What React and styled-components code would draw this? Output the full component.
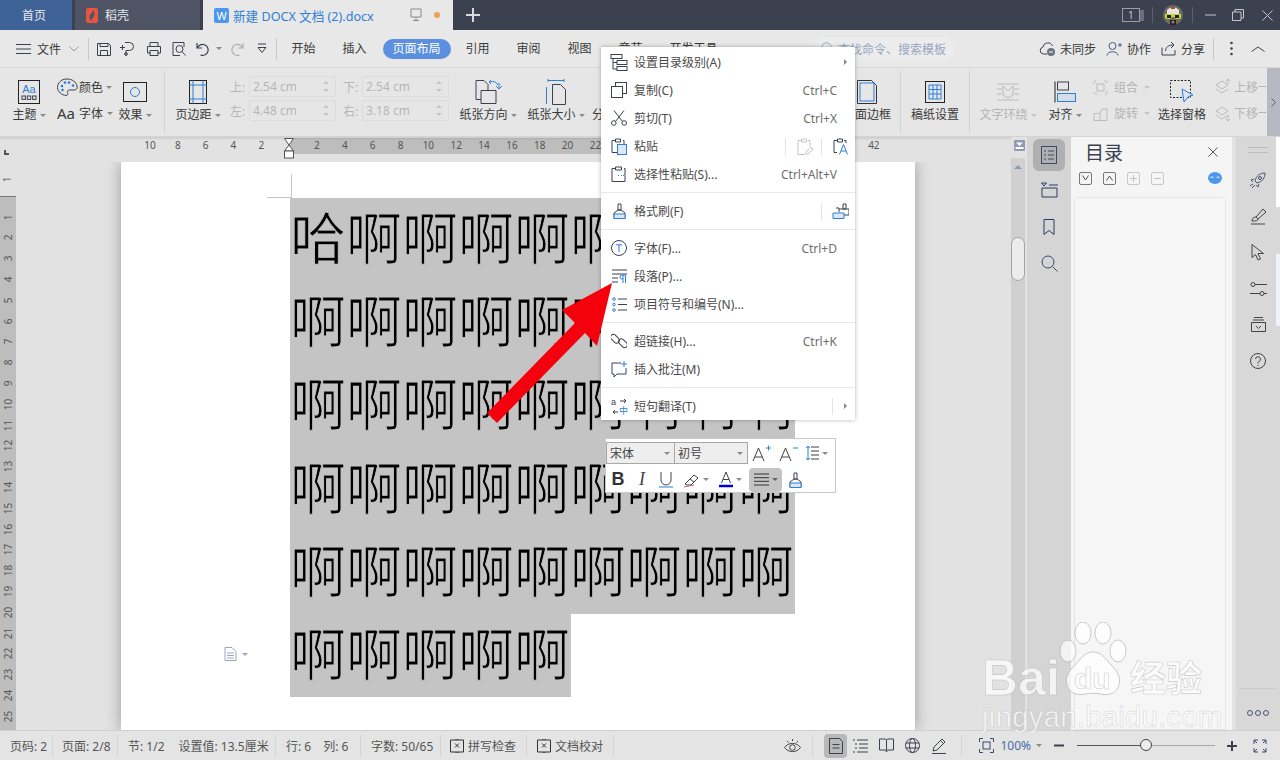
import React from 'react'
import styled, { createGlobalStyle } from 'styled-components'

const UI = `"Noto Sans", "Noto Sans CJK SC", sans-serif`
const BLUE = '#2f7fd6'
const INK = '#3c4150'

const Global = createGlobalStyle`
  html, body { margin: 0; padding: 0; background: #e2e2e2; }
  body { font-family: ${UI}; font-size: 12px; color: #3a3a3a; }
  #root { width: 1280px; height: 760px; overflow: hidden; }
  svg { flex: none; }
`

const Window = styled.div`
  position: relative;
  width: 1280px;
  height: 760px;
  display: flex;
  flex-direction: column;
  overflow: hidden;
`

/* ---------- title bar ---------- */
const TitleBar = styled.div`
  height: 30px;
  flex: none;
  display: flex;
  align-items: stretch;
  background: #3c4150;
  color: #fff;
`
const Tab = styled.div`
  width: ${p => p.$w}px;
  margin-right: 3px;
  display: flex;
  align-items: center;
  gap: ${p => p.$gap || 5}px;
  padding-left: ${p => p.$pl}px;
  box-sizing: border-box;
  background: ${p => p.$bg};
  color: ${p => p.$color || '#e6e8ee'};
  font-size: 12px;
`
const DocName = styled.span`
  width: 173px;
  white-space: nowrap;
  font-size: 12.6px;
`
const Badge = styled.span`
  width: 15px;
  height: 15px;
  flex: none;
  display: flex;
  align-items: center;
  justify-content: center;
  color: #fff;
  font-size: 11px;
  background: ${p => p.$bg};
  border-radius: 2px;
`
const Dot = styled.span`
  width: 6px;
  height: 6px;
  margin-left: 8px;
  border-radius: 50%;
  background: #eda255;
`
const Plus = styled.div`
  width: 34px;
  display: flex;
  align-items: center;
  justify-content: center;
`
const TitleRight = styled.div`
  margin-left: auto;
  display: flex;
  align-items: center;
`
const TitleSep = styled.span`
  width: 1px;
  height: 16px;
  background: #5b6070;
  margin: ${p => p.$m};
`
const Gap = styled.span`
  width: ${p => p.$w}px;
  flex: none;
`

/* ---------- menu row ---------- */
const MenuRow = styled.div`
  height: 38px;
  flex: none;
  display: flex;
  align-items: center;
  background: #e8e8e8;
  border-bottom: 1px solid #d8d8d8;
  box-sizing: border-box;
  padding-left: 16px;
`
const FileLabel = styled.span`
  margin: 0 8px 0 5px;
  font-size: 12px;
`
const RowSep = styled.span`
  width: 1px;
  height: 22px;
  background: #c8c8c8;
  margin: ${p => p.$m};
`
const QuickBtn = styled.span`
  width: ${p => p.$w}px;
  display: flex;
  align-items: center;
  justify-content: center;
`
const TabItem = styled.span`
  padding: 0 13.5px;
  height: 20px;
  line-height: 20px;
  font-size: 12px;
  white-space: nowrap;
`
const ActiveTabItem = styled.span`
  width: 68px;
  height: 20px;
  margin: 0 1.5px 0 2.5px;
  text-align: center;
  line-height: 20px;
  border-radius: 10px;
  background: #5b8fdf;
  color: #fff;
  font-size: 12px;
`
const RowRight = styled.div`
  margin-left: auto;
  display: flex;
  align-items: center;
`
const SearchPill = styled.div`
  width: 140px;
  height: 24px;
  margin-right: 85px;
  padding-left: 7px;
  box-sizing: border-box;
  display: flex;
  align-items: center;
  gap: 4px;
  border-radius: 12px;
  background: #ececec;
  color: #9aa6c0;
  font-size: 12px;
  white-space: nowrap;
`
const RowAction = styled.span`
  display: flex;
  align-items: center;
  gap: ${p => p.$gap}px;
  margin-right: ${p => p.$mr}px;
  font-size: 12px;
`

/* ---------- ribbon ---------- */
const Ribbon = styled.div`
  height: 69px;
  flex: none;
  display: flex;
  background: #e6e6e6;
  border-bottom: 1px solid #d4d4d4;
  box-sizing: border-box;
  padding-left: 8px;
  overflow: hidden;
`
const Col = styled.div`
  width: ${p => p.$w}px;
  margin-left: ${p => p.$ml || 0}px;
  flex: none;
  display: flex;
  flex-direction: column;
  align-items: center;
  padding-top: 10px;
  box-sizing: border-box;
  color: ${p => (p.$off ? '#b4b4b4' : '#3a3a3a')};
  white-space: nowrap;
`
const ColIcon = styled.div`
  height: 27px;
  display: flex;
  align-items: center;
  justify-content: center;
`
const ColLabel = styled.div`
  height: 18px;
  margin-top: 1px;
  line-height: 18px;
  display: flex;
  align-items: center;
  gap: 3px;
  font-size: 12px;
`
const Caret = styled.span`
  width: 0;
  height: 0;
  flex: none;
  margin-left: ${p => p.$ml || 0}px;
  border-left: 3px solid transparent;
  border-right: 3px solid transparent;
  border-top: 3px solid ${p => p.$c || '#8a8a8a'};
`
const StackCol = styled.div`
  width: ${p => p.$w}px;
  margin-left: ${p => p.$ml || 0}px;
  flex: none;
  display: flex;
  flex-direction: column;
  gap: 4px;
  padding-top: 8px;
  box-sizing: border-box;
  color: ${p => (p.$off ? '#b4b4b4' : '#3a3a3a')};
  white-space: nowrap;
  overflow: hidden;
`
const StackRow = styled.div`
  height: 22px;
  display: flex;
  align-items: center;
  gap: ${p => p.$gap || 3}px;
  font-size: 12px;
`
const RibbonSep = styled.span`
  width: 1px;
  height: 62px;
  margin: 3px ${p => p.$r || 0}px 0 ${p => p.$l || 0}px;
  flex: none;
  background: #d2d2d2;
`
const MarginGrid = styled.div`
  margin: 8px 0 0 7px;
  flex: none;
  display: grid;
  grid-template-columns: 19px 87px 26px 87px;
  grid-auto-rows: 21px;
  row-gap: 3px;
  align-items: center;
  color: #b6b6b6;
  font-size: 12px;
`
const MarginLabel = styled.span`
  margin-left: ${p => p.$ml || 0}px;
  white-space: nowrap;
`
const MarginInput = styled.div`
  height: 21px;
  display: flex;
  align-items: center;
  justify-content: space-between;
  padding: 0 6px 0 3px;
  box-sizing: border-box;
  border: 1px solid #dcdcdc;
  border-radius: 2px;
  color: #b6b6b6;
`
const Spin = styled.span`
  display: flex;
  flex-direction: column;
  gap: 5px;
  & > i {
    width: 0;
    height: 0;
    border-left: 3px solid transparent;
    border-right: 3px solid transparent;
  }
  & > i:first-child { border-bottom: 3px solid #c4c4c4; }
  & > i:last-child { border-top: 3px solid #c4c4c4; }
`
const RibbonFill = styled.div`
  flex: 1;
`
const RibbonScroll = styled.div`
  width: 13px;
  flex: none;
  margin-left: 1px;
  display: flex;
  align-items: center;
  justify-content: center;
  background: #b6b9c2;
`

/* ---------- body ---------- */
const Body = styled.div`
  flex: 1;
  min-height: 0;
  display: flex;
`
const Workspace = styled.div`
  width: 1011px;
  flex: none;
  display: flex;
  flex-direction: column;
`
const HRuler = styled.div`
  height: 25px;
  flex: none;
  display: flex;
  align-items: flex-start;
  padding-left: 136px;
  box-sizing: border-box;
  position: relative;
  background:
    linear-gradient(90deg, #e2e2e2 290px, #bdbdbd 290px, #bdbdbd 796px, #e2e2e2 796px) 0 0 / 100% 16px no-repeat,
    #e2e2e2;
  border-top: 1px solid #d0d0d0;
  box-shadow: inset 0 2px 2px -1px rgba(0, 0, 0, 0.08);
`
const RulerTick = styled.span`
  width: 27.85px;
  flex: none;
  text-align: center;
  font-size: 10px;
  line-height: 15px;
  color: #555;
`
const RulerMark = styled.span`
  width: 27.85px;
  flex: none;
  display: flex;
  justify-content: center;
`
const Corner = styled.span`
  position: absolute;
  left: 4px;
  top: 12px;
  width: 5px;
  height: 5px;
  border-left: 2px solid #555;
  border-bottom: 2px solid #555;
  box-sizing: border-box;
`
const DocRow = styled.div`
  flex: 1;
  min-height: 0;
  display: flex;
  overflow: hidden;
`
const VRuler = styled.div`
  width: 16px;
  flex: none;
  display: flex;
  flex-direction: column;
  background: #e2e2e2;
`
const VRulerTop = styled.div`
  height: 35px;
  flex: none;
  display: flex;
  align-items: center;
  justify-content: center;
  border-bottom: 1px solid #777;
  box-sizing: border-box;
`
const VRulerRest = styled.div`
  flex: 1;
  background: #bdbdbd;
  padding-top: 9.6px;
  overflow: hidden;
`
const VTick = styled.div`
  height: 20.8px;
  line-height: 20.8px;
  text-align: center;
  font-size: 10px;
  color: #555;
  transform: rotate(-90deg);
`
const Canvas = styled.div`
  flex: 1;
  min-width: 0;
  padding-left: 105px;
  background: #e2e2e2;
  overflow: hidden;
`
const Page = styled.div`
  position: relative;
  width: 794px;
  height: 100%;
  box-sizing: border-box;
  padding: 36px 0 0 169px;
  background: #fff;
  box-shadow: 0 0 14px rgba(0, 0, 0, 0.32);
`
const CropV = styled.span`
  position: absolute;
  left: 170px;
  top: 12px;
  width: 1px;
  height: 24px;
  background: #c4c4c4;
`
const CropH = styled.span`
  position: absolute;
  left: 146px;
  top: 35px;
  width: 24px;
  height: 1px;
  background: #c4c4c4;
`
const PageMark = styled.span`
  position: absolute;
  left: 103px;
  top: 485px;
  display: flex;
  align-items: center;
  gap: 5px;
`
const Line = styled.div`
  width: ${p => p.$chars * 56.1}px;
  height: 83.2px;
  box-sizing: border-box;
  line-height: 73px;
  background: #c4c4c4;
  color: #000;
  font-family: "Noto Sans CJK SC", sans-serif;
  font-size: 56px;
  -webkit-text-stroke: 0.9px #c4c4c4;
  white-space: nowrap;
`
const ScrollCol = styled.div`
  width: 16px;
  flex: none;
  display: flex;
  flex-direction: column;
  align-items: stretch;
  background: #e2e2e2;
`
const ScrollHead = styled.div`
  height: 18px;
  flex: none;
  display: flex;
  justify-content: center;
  padding-top: 3px;
`
const ScrollTrack = styled.div`
  flex: 1;
  margin-right: 2px;
  background: #d0d0d0;
  position: relative;
  display: flex;
  flex-direction: column;
  align-items: center;
`
const ScrollUp = styled.span`
  margin-top: 7px;
  width: 0;
  height: 0;
  border-left: 4px solid transparent;
  border-right: 4px solid transparent;
  border-bottom: 4px solid #8f9ab5;
`
const ScrollThumb = styled.span`
  position: absolute;
  top: 79px;
  left: 0;
  width: 14px;
  height: 44px;
  box-sizing: border-box;
  border: 1px solid #a4a4a4;
  border-radius: 7px;
  background: #ececec;
`
const SideStrip = styled.div`
  width: 44px;
  flex: none;
  display: flex;
  flex-direction: column;
  align-items: center;
  background: #d5d5d5;
  padding-top: 2px;
  box-sizing: border-box;
`
const SideBtn = styled.div`
  width: 32px;
  height: 32px;
  margin-bottom: ${p => p.$mb}px;
  display: flex;
  align-items: center;
  justify-content: center;
  border-radius: 6px;
  background: ${p => (p.$on ? '#b0b0b0' : 'transparent')};
`
const Panel = styled.div`
  width: 162px;
  flex: none;
  display: flex;
  flex-direction: column;
  background: #f5f5f5;
  padding: 0 6px 0 3px;
  box-sizing: border-box;
  border-right: 1px solid #e4e4e4;
`
const PanelHead = styled.div`
  height: 30px;
  flex: none;
  display: flex;
  align-items: center;
  justify-content: space-between;
  padding: 0 8px 0 11px;
`
const PanelTitle = styled.span`
  font-size: 19px;
  color: #3a3f4d;
`
const PanelTools = styled.div`
  height: 22px;
  margin: 0 0 8px 1px;
  flex: none;
  display: flex;
  align-items: center;
  gap: 11px;
  padding: 0 4px;
`
const ToolBox = styled.span`
  width: 13px;
  height: 13px;
  box-sizing: border-box;
  border: 1px solid ${p => (p.$off ? '#c8c8c8' : '#777')};
  border-radius: 2px;
  display: flex;
  align-items: center;
  justify-content: center;
`
const PanelSpacer = styled.span`
  flex: 1;
`
const PanelBox = styled.div`
  flex: 1;
  border: 1px solid #e4e4e4;
  border-radius: 5px 5px 0 0;
  background: #f6f6f6;
`
const RightStrip = styled.div`
  flex: 1;
  position: relative;
  margin-left: 2px;
  display: flex;
  flex-direction: column;
  align-items: center;
  background: #d8d8d8;
  border-left: 1px solid #e0e0e0;
  padding-top: 10px;
`
const Handle = styled.span`
  width: 20px;
  height: 4px;
  margin-bottom: 17px;
  border-top: 1px solid #bcbcbc;
  border-bottom: 1px solid #bcbcbc;
`
const RailBtn = styled.span`
  height: 20px;
  margin-bottom: 16.2px;
  display: flex;
  align-items: center;
  justify-content: center;
`
const RailFoot = styled.div`
  margin-top: auto;
  width: 38px;
  height: 42px;
  padding-top: 6px;
  box-sizing: border-box;
  display: flex;
  align-items: center;
  justify-content: center;
  gap: 2px;
  border-top: 1px solid #cccccc;
`
const RailDot = styled.i`
  width: 4px;
  height: 4px;
  border: 1px solid #4a5270;
  border-radius: 50%;
`
const Sliver = styled.span`
  position: absolute;
  right: 0;
  top: ${p => p.$top}px;
  width: 4px;
  height: ${p => p.$h}px;
  background: ${p => p.$bg};
`

/* ---------- status bar ---------- */
const StatusBar = styled.div`
  height: 30px;
  flex: none;
  display: flex;
  align-items: center;
  background: #e4e4e4;
  border-top: 1px solid #cfcfcf;
  box-sizing: border-box;
  color: #555;
  font-size: 12px;
  white-space: nowrap;
`
const StatusCell = styled.div`
  width: ${p => p.$w}px;
  height: 22px;
  flex: none;
  display: flex;
  align-items: center;
  gap: ${p => p.$gap || 4}px;
  padding-left: ${p => p.$pl || 10}px;
  box-sizing: border-box;
  border-right: 1px solid #d4d4d4;
`
const StatusRight = styled.div`
  margin-left: auto;
  display: flex;
  align-items: center;
  padding-right: 13px;
`
const ViewBtn = styled.span`
  width: ${p => p.$w || 26}px;
  height: 24px;
  display: flex;
  align-items: center;
  justify-content: center;
  border-radius: 4px;
  background: ${p => (p.$on ? '#b8b8b8' : 'transparent')};
`
const StatusSep = styled.span`
  width: 1px;
  height: 22px;
  background: #d4d4d4;
  margin: ${p => p.$m};
`
const Zoom = styled.span`
  margin-left: 6px;
  color: #4a6fa5;
  font-size: 12px;
`
const SliderTrack = styled.span`
  position: relative;
  width: 138px;
  height: 1px;
  margin: 0 10px 0 13px;
  background: linear-gradient(90deg, #555 50%, #aaa 50%);
`
const SliderKnob = styled.span`
  position: absolute;
  left: 63px;
  top: -6px;
  width: 12px;
  height: 12px;
  box-sizing: border-box;
  border: 1px solid #444;
  border-radius: 50%;
  background: #ececec;
`

/* ---------- context menu ---------- */
const ContextMenu = styled.div`
  position: absolute;
  left: 601px;
  top: 47px;
  width: 254px;
  box-sizing: border-box;
  padding-top: 1px;
  background: #fff;
  box-shadow: 0 0 4px rgba(0, 0, 0, 0.3);
  color: #4a4a4a;
  font-size: 12px;
`
const MenuItem = styled.div`
  height: 28px;
  display: flex;
  align-items: center;
  padding: 0 18px 0 8px;
  white-space: nowrap;
`
const MenuIcon = styled.span`
  width: 20px;
  height: 20px;
  margin-right: 5px;
  flex: none;
  display: flex;
  align-items: center;
  justify-content: center;
`
const Shortcut = styled.span`
  margin-left: auto;
  color: #6e6e6e;
`
const SubSep = styled.span`
  width: 1px;
  height: 17px;
  background: #e4e4e4;
  margin: ${p => p.$m};
`
const MenuArrow = styled.span`
  margin-left: ${p => (p.$auto ? 'auto' : '11px')};
  margin-right: -10px;
  width: 0;
  height: 0;
  border-top: 3px solid transparent;
  border-bottom: 3px solid transparent;
  border-left: 3px solid #8a8a8a;
`
const MenuDivider = styled.div`
  height: 1px;
  margin: 4px 0;
  background: #e8e8e8;
`
const PushRight = styled.span`
  margin-left: auto;
  margin-right: ${p => p.$mr || 0}px;
  display: flex;
  align-items: center;
`

/* ---------- mini toolbar ---------- */
const MiniBar = styled.div`
  position: absolute;
  left: 605px;
  top: 438px;
  width: 231px;
  height: 55px;
  box-sizing: border-box;
  padding: 3px 0 0 0;
  background: #fff;
  border: 1px solid #c8c8c8;
  display: flex;
  flex-direction: column;
`
const MiniRow = styled.div`
  height: ${p => p.$h}px;
  margin-top: ${p => p.$mt || 0}px;
  flex: none;
  display: flex;
  align-items: center;
`
const Combo = styled.div`
  width: ${p => p.$w}px;
  height: 22px;
  box-sizing: border-box;
  border: 1px solid #a8a8a8;
  margin-left: ${p => p.$ml || 0}px;
  background: #eeeeee;
  padding: 0 4px 0 3px;
  display: flex;
  align-items: center;
  justify-content: space-between;
  color: #444;
  font-size: 12px;
`
const MiniBtn = styled.span`
  width: ${p => p.$w}px;
  height: 24px;
  display: flex;
  align-items: center;
  justify-content: center;
  gap: 3px;
  border-radius: 4px;
  margin-left: ${p => p.$ml || 0}px;
  background: ${p => (p.$on ? '#c4c4c4' : 'transparent')};
`
const BoldB = styled.span`
  font-family: "Liberation Sans", sans-serif;
  font-weight: 700;
  font-size: 18px;
  color: #333;
`
const ItalicI = styled.span`
  font-family: "Liberation Serif", serif;
  font-style: italic;
  font-size: 18px;
  color: #444;
`

/* ---------- overlays ---------- */
const ArrowLayer = styled.svg`
  position: absolute;
  left: 470px;
  top: 270px;
  pointer-events: none;
`
const Watermark = styled.div`
  position: absolute;
  left: 982px;
  top: 620px;
  width: 240px;
  height: 112px;
  pointer-events: none;
`
const WaterBig = styled.span`
  position: absolute;
  left: ${p => p.$x}px;
  top: ${p => p.$y}px;
  font-family: ${p => p.$f || '"Liberation Sans", sans-serif'};
  font-weight: 700;
  font-size: ${p => p.$s}px;
  line-height: 1;
  color: rgba(255, 255, 255, 0.72);
  -webkit-text-stroke: 0.6px rgba(170, 170, 170, 0.6);
  white-space: nowrap;
`
const WaterUrl = styled.span`
  position: absolute;
  left: 0;
  top: 83px;
  font-family: "Liberation Sans", sans-serif;
  font-size: 29px;
  line-height: 1;
  color: rgba(255, 255, 255, 0.72);
  -webkit-text-stroke: 0.5px rgba(170, 170, 170, 0.55);
  letter-spacing: 0.4px;
  white-space: nowrap;
`

/* ---------- icons ---------- */
const Ic = ({ s = 16, h, c = INK, w = 1, vb, children }) => (
  <svg width={s} height={h || s} viewBox={vb || `0 0 ${s} ${h || s}`} fill="none" stroke={c} strokeWidth={w}>
    {children}
  </svg>
)
const Hamburger = () => <Ic s={16} h={12}><path d="M0 1.5h15M0 6h15M0 10.5h15" /></Ic>
const Chevron = ({ up, c = '#888', s = 10 }) => (
  <Ic s={s} h={6} c={c}><path d={up ? `M0.5 5.5L${s / 2} 1L${s - 0.5} 5.5` : `M0.5 0.5L${s / 2} 5L${s - 0.5} 0.5`} /></Ic>
)
const Save = () => <Ic><path d="M1.5 2.5h11l2 2v10h-13zM4.5 14.5v-5h7v5M4 2.5v3h8v-3" /></Ic>
const Branch = () => <Ic><path d="M6 1.5h4.5a4 4 0 0 1 0 8H7v5M1 6.5h5M3.5 4v5" /><circle cx="7" cy="13" r="1.4" /></Ic>
const Printer = () => <Ic><path d="M4 5V1.5h8V5M1.5 12V5.5h13V12h-3M4.5 12h-3M4 9.5h8v5H4z" /></Ic>
const Preview = () => <Ic><path d="M13 6V1.5H2v13h7" /><circle cx="8.5" cy="8" r="3.5" /><path d="M11 10.5l3.5 4" /></Ic>
const Undo = ({ c = INK }) => <Ic c={c} w={1.2}><path d="M2 2v5h5M2.5 7a5.5 5.5 0 1 1 3 7" /></Ic>
const Redo = () => <Ic c="#b0b0b0" w={1.2}><path d="M14 2v5H9M13.5 7a5.5 5.5 0 1 0-3 7" /></Ic>
const More = () => <Ic s={10} h={11}><path d="M1 1h8M1 4.5l4 5 4-5z" /></Ic>
const Magnifier = ({ s = 13, c = '#9aa6c0' }) => <Ic s={s} c={c}><circle cx={s * 0.42} cy={s * 0.42} r={s * 0.36} /><path d={`M${s * 0.68} ${s * 0.68}L${s - 1} ${s - 1}`} /></Ic>
const Cloud = () => (
  <Ic s={17}><path d="M8 14H4.5a3.5 3.5 0 0 1-.6-6.9A5 5 0 0 1 13.5 6" /><circle cx="12" cy="12" r="4" fill="#6b7280" stroke="none" /><path d="M10 12h4" stroke="#fff" /></Ic>
)
const UserPlus = () => <Ic c="#4a5a85"><circle cx="6.5" cy="5" r="3.5" /><path d="M1 14.5c0-5 11-5 11 0M12 4h4M14 2v4" /></Ic>
const ShareIc = () => <Ic s={15}><path d="M1 6.5v7.5h13V9M4.5 10c0-4 3-6 8-6M10 1l3 3-3 3" /></Ic>
const Dots = () => <Ic s={3} h={15} c="none"><g fill="#444"><circle cx="1.5" cy="2" r="1.3" /><circle cx="1.5" cy="7.5" r="1.3" /><circle cx="1.5" cy="13" r="1.3" /></g></Ic>

const Theme = () => (
  <Ic s={22} h={24} c="#222">
    <rect x=".5" y=".5" width="21" height="23" />
    <text x="11" y="13" fontSize="11" textAnchor="middle" fill={BLUE} stroke="none" fontFamily="Liberation Sans">Aa</text>
    <g stroke={INK}><rect x="4" y="16" width="3.4" height="3.4" /><rect x="9.300" y="16" width="3.4" height="3.4" /><rect x="14.600" y="16" width="3.4" height="3.4" /></g>
  </Ic>
)
const Palette = () => (
  <Ic s={21} h={19}><path d="M10 1C4 1 .5 5 .5 9.5S5 17 9 17.5c2 0 2-1.5 1.5-3s.5-2.5 2.5-2.5h4c2.5 0 3.5-1.5 3-4C19.500 4 15 1 10 1z" /><g fill={BLUE} stroke="none"><circle cx="5" cy="8" r="1.3" /><circle cx="8" cy="4.6" r="1.3" /><circle cx="12" cy="4.6" r="1.3" /><circle cx="16" cy="7.5" r="1.3" /><circle cx="5.5" cy="12" r="1.3" /></g></Ic>
)
const Effect = () => <Ic s={24} h={20} c="#222"><rect x=".5" y=".5" width="23" height="19" /><circle cx="12" cy="10" r="4.5" stroke={BLUE} /></Ic>
const Margins = () => <Ic s={18} h={24} c="#222"><rect x=".5" y=".5" width="17" height="23" /><path d="M4 .5v23M14 .5v23M.5 5h17M.5 19h17" stroke={BLUE} /></Ic>
const Orientation = () => (
  <Ic s={28} h={26}><path d="M2 1.5h8l4 4v6M2 1.5v19h5M7 11.5h15v13H7z" /><path d="M16 3a6 6 0 0 1 8 3M25 4v6M22 7l3 3 3-3M17 1l-2 2 2 2" stroke={BLUE} /></Ic>
)
const PageSize = () => (
  <Ic s={20} h={26}><path d="M6.5 5.5h8l5 5v15h-13z" /><path d="M.5 8v17M2 1.5h16M2 0v3M18 0v3" stroke={BLUE} /></Ic>
)
const PageBorder = () => <Ic s={20} h={24} c="#333"><path d="M.5.5h14l5 5v18H.5z" /><rect x="3" y="3" width="14" height="18" stroke={BLUE} /></Ic>
const GridPaper = () => <Ic s={20} h={22} c="#222"><rect x=".5" y=".5" width="19" height="21" /><path d="M4 4h12v14H4zM4 8.5h12M4 13h12M8 4v14M12 4v14" stroke={BLUE} /></Ic>
const TextWrap = () => <Ic s={22} h={18} c="#bcbcbc"><path d="M0 1h22M0 17h22M0 6h5M17 6h5M0 11h5M17 11h5M6 3l5 5 5-5v9l-5 3-5-3z" /></Ic>
const Align = () => <Ic s={22} h={22}><path d="M1 .5v21" stroke="#222" /><rect x="3.5" y="1" width="11" height="8" /><rect x="3.5" y="12.5" width="18" height="8" stroke={BLUE} fill="#d5dde8" /></Ic>
const Group = () => <Ic s={15} c="#bcbcbc"><path d="M1 4V1h3M11 1h3v3M14 11v3h-3M4 14H1v-3" strokeDasharray="2 1" /><rect x="4" y="4" width="7" height="7" /></Ic>
const Rotate = () => <Ic s={15} c="#bcbcbc"><path d="M1 14.5v-7h6v7zM7 14.5h7V3H9L7 7.5" /></Ic>
const Pane = () => (
  <Ic s={24} h={24}><rect x=".5" y=".5" width="20" height="17" strokeDasharray="2 1.5" stroke="#222" /><path d="M12 9l11 6-4.500 1.500L14 22z" stroke={BLUE} fill="#dbe5f2" /></Ic>
)
const LayerUp = () => <Ic s={16} c="#bcbcbc"><path d="M1 6l6-4 6 4-6 4zM1 10l6 4 6-4M13 5V0M11 2l2-2 2 2" /></Ic>
const LayerDown = () => <Ic s={16} c="#bcbcbc"><path d="M1 6l6-4 6 4-6 4zM1 10l6 4 6-4M13 10v6M11 14l2 2 2-2" /></Ic>

const Hourglass = () => (
  <svg width="10" height="21" viewBox="0 0 10 21" stroke="#555" fill="#fff" strokeWidth="1">
    <path d="M.5.5h9L5 7zM5 7l4.5 6H.5z" />
    <rect x=".5" y="13" width="9" height="7" />
  </svg>
)
const OutlineIc = () => <Ic s={18} c="#3c4a6b"><rect x="1.5" y=".5" width="15" height="17" /><path d="M4 5h2M8 5h6M4 9h2M8 9h6M4 13h2M8 13h6" /></Ic>
const TreeIc = () => <Ic s={17} h={16} c="#2b3a63"><path d="M.5 1h5L3 4zM8 3h9M1 6h15v9H1z" /></Ic>
const BookmarkIc = () => <Ic s={12} h={17} c="#2b3a63"><path d="M1 .5h10v15l-5-4-5 4z" /></Ic>
const SearchIc = () => <Ic s={17} c="#3c4a6b"><circle cx="7" cy="7" r="6" /><path d="M11.5 11.5l5 5" /></Ic>
const CloseX = ({ s = 10, c = '#555' }) => <Ic s={s} c={c}><path d={`M.5.5L${s - 0.5} ${s - 0.5}M${s - 0.5} .5L.5 ${s - 0.5}`} /></Ic>
const Smiley = () => (
  <svg width="14" height="12" viewBox="0 0 14 12"><ellipse cx="7" cy="6" rx="7" ry="6" fill="#4e96ee" /><path d="M2.5 6L4 4.5 5.5 6M8.5 6L10 4.500 11.5 6" stroke="#fff" fill="none" /></svg>
)
const Rocket = () => <Ic s={18} c="#4a5270"><path d="M16 2c-5 0-9 3-10 8l2 2c5-1 8-5 8-10zM5 8L2 9l2 2M10 13l-1 3-2-2M1 15l3-2M3 17l3-3" /><circle cx="11" cy="7" r="1.5" /></Ic>
const Brush = () => <Ic s={17} c="#444"><path d="M1 16h14M2 13c0-3 2-4 4-4l7-8 3 3-8 7c0 2-2 2-6 2zM6 9l2 2" /></Ic>
const Pointer = () => <Ic s={14} h={17} c="#444"><path d="M1 .5v13l3.5-3L7 16l2.5-1L7 9.5h5.5z" /></Ic>
const Sliders = () => <Ic s={17} h={14} c="#444"><circle cx="3" cy="2.5" r="2" /><path d="M5 2.5h12M0 11.5h10" /><circle cx="12" cy="11.5" r="2" /><path d="M14 11.5h3" /></Ic>
const Archive = () => <Ic s={15} c="#444"><path d="M3 .5h9M2 3h11M.5 5.5h14v9H.5zM5 9l2.5 2.5L10 9" /></Ic>
const Help = () => <Ic s={16} c="#444"><circle cx="8" cy="8" r="7.5" /><path d="M5.5 6a2.5 2.5 0 1 1 3.500 2.500c-1 .5-1 1-1 2M8 12v1" /></Ic>
const SpellBox = () => <Ic s={14} c="#333"><path d="M.5 1h13v12h-13zM5 4.500l4 4M9 4.500l-4 4M6 1V0M8 1V0M6 14v-1M8 14v-1" /></Ic>
const Eye = () => <Ic s={17} h={15} c="#444"><path d="M.5 9.500c4-5.500 12-5.500 16 0-4 5.500-12 5.500-16 0z" /><circle cx="8.5" cy="9.5" r="2.8" /><path d="M3 3l1.5 1.5M8.5 1v2M14 3l-1.5 1.5" /></Ic>
const PageView = () => <Ic s={14} h={16}><path d="M.5.5h10l3 3v12H.5zM3.5 6.5h7M3.5 10h7" /></Ic>
const OutlineView = () => <Ic s={15} h={14}><path d="M0 1h2M4 1h11M2 5h2M6 5h9M2 9h2M6 9h9M0 13h2M4 13h11" /></Ic>
const BookView = () => <Ic s={15} h={15}><path d="M.5 1h6l1 1 1-1h6v11h-6l-1 2-1-2h-6zM7.500 2v10" /></Ic>
const GlobeView = () => <Ic s={15}><circle cx="7.5" cy="7.5" r="7" /><ellipse cx="7.5" cy="7.5" rx="3" ry="7" /><path d="M1 5h13M1 10h13" /></Ic>
const PenView = () => <Ic s={16}><path d="M1 15.5h14M2 13l1-4 8-8 3 3-8 8zM9.5 2.5l3 3" /></Ic>
const Focus = () => <Ic s={15} c="#3c4a6b"><path d="M.5 4V.5H4M11 .5h3.5V4M14.5 11v3.5H11M4 14.500H.5V11" /><rect x="4" y="4" width="7" height="7" /></Ic>
const Fullscreen = () => <Ic s={14} c="#3c4a6b"><path d="M1 5V1h4M9 1h4v4M13 9v4H9M5 13H1V9M1 1l3 3M13 1l-3 3M13 13l-3-3M1 13l3-3" /></Ic>
const Minus = () => <Ic s={10} h={3} c={INK} w={2}><path d="M0 1.5h10" /></Ic>
const PlusBold = () => <Ic s={10} c={INK} w={2}><path d="M0 5h10M5 0v10" /></Ic>
const DocMark = () => <Ic s={13} h={14} c="#9aa6c0"><path d="M1 .5h7l4 4v9H1zM3 6h7M3 8.500h7M3 11h7" /></Ic>

const MTree = () => <Ic s={18} h={17}><rect x="1" y=".5" width="11" height="4" /><rect x="7" y="6.5" width="10" height="4" /><rect x="7" y="12.5" width="10" height="4" /><path d="M3 5v10h4M3 8.500h4" /></Ic>
const MCopy = () => <Ic s={16}><rect x="4.5" y=".5" width="11" height="11" /><rect x=".5" y="4.5" width="11" height="11" fill="#fff" /></Ic>
const MCut = () => <Ic s={16}><circle cx="2.8" cy="13" r="2.3" /><circle cx="13.2" cy="13" r="2.3" /><path d="M4.500 11.500L13 .5M11.500 11.500L3 .5" /></Ic>
const MPaste = () => <Ic s={16} h={17}><path d="M4 2.500H1v12h5M12 2.500h1V6M4.500 1h5v3h-5z" /><rect x="6.5" y="6.5" width="9" height="10" stroke={BLUE} fill="#dbe7f5" /></Ic>
const MPasteSpec = () => <Ic s={16}><path d="M4 2.500H1v13h13v-13h-1M4.500 1h6v3h-6z" /><path d="M7 9.500h1M10 9.500h1M12 9.500h1" stroke={BLUE} /></Ic>
const MPasteOff = () => <Ic s={16} h={17} c="#c4c4c4"><path d="M4 2.500H1v14h7M11 2.500h2V8M4.500 1h5v3h-5zM9 14l5-5 2 2-5 5H9z" /></Ic>
const MPasteText = () => <Ic s={16} h={17}><path d="M4 2.500H1v12h3M11 2.500h2V5M4.500 1h5v3h-5z" /><path d="M6.500 16.500l4-10 4 10M8 13h5" stroke={BLUE} /></Ic>
const MBrush = ({ fill = '#dbe7f5' }) => <Ic s={13} h={16}><path d="M5 1h3v6H5zM1 15.500V10l4-3h3l4 3v5.500z" /><path d="M1 11h11v4.500H1z" stroke={BLUE} fill={fill} /></Ic>
const MBrushes = () => <Ic s={17} h={16}><path d="M11 1h3v5h-3zM7 6h10v6H11M4 5h3v4" /><path d="M1 15.500V10h11v5.500z" stroke={BLUE} fill="#dbe7f5" /></Ic>
const MFont = () => <Ic s={16}><circle cx="8" cy="8" r="7.5" /><path d="M4.800 4.800h6.400M8 4.800V12" stroke={BLUE} /></Ic>
const MPara = () => <Ic s={15} h={14}><path d="M0 1h15M0 5h15M0 9h6M0 13h6" /><path d="M11 6v8M13.500 6v8M13.500 6H10a2 2 0 0 0 0 4h1" stroke={BLUE} /></Ic>
const MList = () => <Ic s={15} h={15}><path d="M6 2h9M6 7.500h9M6 13h9" /><g stroke={BLUE}><circle cx="2" cy="2" r="1.3" /><circle cx="2" cy="7.5" r="1.3" /><circle cx="2" cy="13" r="1.3" /></g></Ic>
const MLink = () => (
  <Ic s={16} c="#444">
    <rect x="-1" y="3" width="10" height="5.500" rx="2.750" transform="rotate(45 4 5.750)" />
    <rect x="7" y="7.500" width="10" height="5.500" rx="2.750" transform="rotate(45 12 10.250)" />
  </Ic>
)
const MNote = () => <Ic s={16}><path d="M10 2H1v11h2v3l3-3h9V7" /><path d="M13 0v6M10 3h6" stroke={BLUE} /></Ic>
const MTrans = () => (
  <Ic s={17}>
    <text x="0" y="7" fontSize="9" fill={INK} stroke="none" fontFamily="Liberation Sans">a</text>
    <text x="8" y="16" fontSize="9" fill={BLUE} stroke="none" fontFamily="Noto Sans CJK SC">中</text>
    <path d="M9 3h6M13 1l2 2-2 2M7 14H2M4 16l-2-2 2-2" />
  </Ic>
)

const GrowA = ({ sign }) => (
  <Ic s={19} h={17} c="#444"><path d="M1 16L6.500 3 12 16M3 12h7" />{sign === '+' ? <path d="M14 3h5M16.500 .5v5" stroke={BLUE} /> : <path d="M14 3h5" stroke={BLUE} />}</Ic>
)
const LineSpace = () => <Ic s={13} h={16}><path d="M5 2h8M5 6h8M5 10h8M5 14h8" /><path d="M2 1v14M0 3l2-2 2 2M0 13l2 2 2-2" stroke={BLUE} /></Ic>
const UnderU = () => <Ic s={14} h={16} c="#444"><path d="M2 0v8a5 5 0 0 0 10 0V0" /><path d="M0 15h14" stroke={BLUE} /></Ic>
const Eraser = () => <Ic s={16} c="#444"><path d="M1 12L10 3l4 3-7 7H3zM6 7l4 3" /><path d="M0 15L10 13" stroke="#e06060" /></Ic>
const ColorA = () => (
  <Ic s={14} h={17} c="#444"><path d="M2.500 12L7 1l4.500 11M4 8.500h6" /><path d="M0 15h14" stroke="#0000cc" strokeWidth="2.5" /></Ic>
)
const AlignLines = () => <Ic s={15} h={13} c="#333"><path d="M0 1h15M0 4.700h15M0 8.300h15M0 12h15" /></Ic>

const Flame = () => (
  <svg width="12" height="15" viewBox="0 0 12 15">
    <rect width="12" height="15" rx="2" fill="#e8553f" />
    <path d="M7 2c0 3-3.500 4-3.500 7 0 2 1 3 2 4 .2-3 3-4 3-7 0-1.500-.7-3-1.500-4z" fill="#4e5464" />
  </svg>
)
const Avatar = () => (
  <svg width="20" height="20" viewBox="0 0 20 20">
    <circle cx="10" cy="10" r="10" fill="#6b6f62" />
    <path d="M4 5a8 8 0 0 1 12 0v4H4z" fill="#e8e4dc" />
    <path d="M8 1h3l1 3H8z" fill="#9c4a4a" />
    <path d="M2 9h16v3a2 2 0 0 1-2 2h-3l-2-2H9l-2 2H4a2 2 0 0 1-2-2z" fill="#c5d534" />
    <path d="M4 10h4v3H4zM12 10h4v3h-4z" fill="#1d2016" />
    <path d="M7 15h6v3a3 3 0 0 1-6 0z" fill="#2a1f22" />
    <circle cx="10" cy="17" r="1.5" fill="#b56a78" />
  </svg>
)
const Paw = () => (
  <svg width="70" height="76" viewBox="0 0 70 76" style={{ position: 'absolute', left: 76, top: 2 }} fill="rgba(255,255,255,0.72)" stroke="rgba(170,170,170,0.6)">
    <ellipse cx="10" cy="29" rx="8" ry="11" />
    <ellipse cx="25" cy="11" rx="8" ry="11" />
    <ellipse cx="45" cy="11" rx="8" ry="11" />
    <ellipse cx="60" cy="29" rx="8" ry="11" />
    <path d="M35 30c-9 0-13 8-19 14-6 6-9 12-7 19 2 8 10 11 18 9 6-1 10-1 16 0 8 2 16-1 18-9 2-7-1-13-7-19-6-6-10-14-19-14z" />
  </svg>
)

const H_BEFORE = [10, 8, 6, 4, 2]
const H_AFTER = Array.from({ length: 21 }, (_, i) => (i + 1) * 2)
const V_NUMS = Array.from({ length: 25 }, (_, i) => i + 1)
const LINES = ['哈啊啊啊啊啊啊啊啊', '啊啊啊啊啊啊啊啊啊', '啊啊啊啊啊啊啊啊啊', '啊啊啊啊啊啊啊啊啊', '啊啊啊啊啊啊啊啊啊', '啊啊啊啊啊']

export default function App() {
  return (
    <Window>
      <Global />
      <TitleBar>
        <Tab $w={72} $pl={22} $bg="#3f6296">首页</Tab>
        <Tab $w={125} $pl={11} $bg="#4e5464" $gap={7}><Flame />稻壳</Tab>
        <Tab $w={250} $pl={11} $bg="#e8e8e8" $color={BLUE} $gap={4}>
          <Badge $bg="#4e96ee">W</Badge>
          <DocName>新建 DOCX 文档 (2).docx</DocName>
          <Ic s={12} h={14} c="#8a8a8a"><path d="M1 1h10v8H1zM6 9v3M3 12.500h6" /></Ic>
          <Dot />
        </Tab>
        <Plus><Ic s={14} c="#d8dae0" w={2}><path d="M0 7h14M7 0v14" /></Ic></Plus>
        <TitleRight>
          <Ic s={22} h={15} c="#9a9ea8">
            <rect x=".5" y=".5" width="17" height="13" />
            <path d="M19 2v11M21 2v11" />
            <text x="6" y="11" fontSize="10" fill="#c4c6cc" stroke="none">1</text>
          </Ic>
          <TitleSep $m="0 10px 0 8px" />
          <Avatar />
          <TitleSep $m="0 12px 0 9px" />
          <Ic s={11} h={2} c="#c4c6cc"><path d="M0 1h11" /></Ic>
          <Gap $w={16} />
          <Ic s={12} c="#c4c6cc"><path d="M3 3V.5h8.500V9H9M.5 3H9v8.500H.5z" /></Ic>
          <Gap $w={18} />
          <CloseX s={11} c="#c4c6cc" />
          <Gap $w={7} />
        </TitleRight>
      </TitleBar>

      <MenuRow>
        <Hamburger />
        <FileLabel>文件</FileLabel>
        <Chevron c="#999" />
        <RowSep $m="0 7px 0 9px" />
        <QuickBtn $w={16}><Save /></QuickBtn>
        <QuickBtn $w={29}><Branch /></QuickBtn>
        <QuickBtn $w={25}><Printer /></QuickBtn>
        <QuickBtn $w={26}><Preview /></QuickBtn>
        <QuickBtn $w={22}><Undo /></QuickBtn>
        <QuickBtn $w={10}><Caret /></QuickBtn>
        <QuickBtn $w={26}><Redo /></QuickBtn>
        <QuickBtn $w={24}><More /></QuickBtn>
        <RowSep $m="0 1.5px 0 1.5px" />
        <TabItem>开始</TabItem>
        <TabItem>插入</TabItem>
        <ActiveTabItem>页面布局</ActiveTabItem>
        <TabItem>引用</TabItem>
        <TabItem>审阅</TabItem>
        <TabItem>视图</TabItem>
        <TabItem>章节</TabItem>
        <TabItem>开发工具</TabItem>
        <RowRight>
          <SearchPill><Magnifier />查找命令、搜索模板</SearchPill>
          <RowAction $gap={4} $mr={10}><Cloud />未同步</RowAction>
          <RowAction $gap={5} $mr={10}><UserPlus />协作</RowAction>
          <RowAction $gap={5} $mr={8}><ShareIc />分享</RowAction>
          <RowSep $m="0 16px 0 0" />
          <Dots />
          <Gap $w={18} />
          <Chevron up c="#444" s={14} />
          <Gap $w={15} />
        </RowRight>
      </MenuRow>

      <Ribbon>
        <Col $w={42}>
          <ColIcon><Theme /></ColIcon>
          <ColLabel>主题<Caret /></ColLabel>
        </Col>
        <StackCol $w={58} $ml={7}>
          <StackRow $gap={1}><Palette />颜色<Caret $ml={2} /></StackRow>
          <StackRow $gap={4}><span style={{ fontSize: 15 }}>Aa</span>字体<Caret /></StackRow>
        </StackCol>
        <Col $w={40}>
          <ColIcon><Effect /></ColIcon>
          <ColLabel>效果<Caret /></ColLabel>
        </Col>
        <RibbonSep $l={9} />
        <Col $w={50} $ml={8}>
          <ColIcon><Margins /></ColIcon>
          <ColLabel>页边距<Caret /></ColLabel>
        </Col>
        <MarginGrid>
          <MarginLabel>上:</MarginLabel>
          <MarginInput>2.54 cm<Spin><i /><i /></Spin></MarginInput>
          <MarginLabel $ml={7}>下:</MarginLabel>
          <MarginInput>2.54 cm<Spin><i /><i /></Spin></MarginInput>
          <MarginLabel>左:</MarginLabel>
          <MarginInput>4.48 cm<Spin><i /><i /></Spin></MarginInput>
          <MarginLabel $ml={7}>右:</MarginLabel>
          <MarginInput>3.18 cm<Spin><i /><i /></Spin></MarginInput>
        </MarginGrid>
        <Col $w={60} $ml={9}>
          <ColIcon><Orientation /></ColIcon>
          <ColLabel>纸张方向<Caret /></ColLabel>
        </Col>
        <Col $w={60} $ml={8}>
          <ColIcon><PageSize /></ColIcon>
          <ColLabel>纸张大小<Caret /></ColLabel>
        </Col>
        <Col $w={40} $ml={4}>
          <ColIcon><MCut /></ColIcon>
          <ColLabel>分隔符</ColLabel>
        </Col>
        <RibbonFill />
        <Col $w={56}>
          <ColIcon><PageBorder /></ColIcon>
          <ColLabel>页面边框</ColLabel>
        </Col>
        <RibbonSep $l={5} $r={6} />
        <Col $w={56}>
          <ColIcon><GridPaper /></ColIcon>
          <ColLabel>稿纸设置</ColLabel>
        </Col>
        <RibbonSep $l={6} $r={8} />
        <Col $w={60} $off>
          <ColIcon><TextWrap /></ColIcon>
          <ColLabel>文字环绕<Caret $c="#c4c4c4" /></ColLabel>
        </Col>
        <Col $w={40} $ml={7}>
          <ColIcon><Align /></ColIcon>
          <ColLabel>对齐<Caret /></ColLabel>
        </Col>
        <StackCol $w={60} $ml={8} $off>
          <StackRow $gap={6}><Group />组合<Caret $c="#c4c4c4" /></StackRow>
          <StackRow $gap={6}><Rotate />旋转<Caret $c="#c4c4c4" /></StackRow>
        </StackCol>
        <Col $w={54} $ml={2}>
          <ColIcon><Pane /></ColIcon>
          <ColLabel>选择窗格</ColLabel>
        </Col>
        <StackCol $w={51} $ml={6} $off>
          <StackRow $gap={3}><LayerUp />上移一层</StackRow>
          <StackRow $gap={3}><LayerDown />下移一层</StackRow>
        </StackCol>
        <RibbonScroll><Ic s={5} h={9} c="#5a5f6e"><path d="M.5.5l4 4-4 4" /></Ic></RibbonScroll>
      </Ribbon>

      <Body>
        <Workspace>
          <HRuler>
            <Corner />
            {H_BEFORE.map(n => <RulerTick key={n}>{n}</RulerTick>)}
            <RulerMark><Hourglass /></RulerMark>
            {H_AFTER.map(n => <RulerTick key={n}>{n}</RulerTick>)}
          </HRuler>
          <DocRow>
            <VRuler>
              <VRulerTop><VTick>1</VTick></VRulerTop>
              <VRulerRest>
                {V_NUMS.map(n => <VTick key={n}>{n}</VTick>)}
              </VRulerRest>
            </VRuler>
            <Canvas>
              <Page>
                <CropV />
                <CropH />
                <PageMark><DocMark /><Caret $c="#9aa6c0" /></PageMark>
                {LINES.map((t, i) => <Line key={i} $chars={t.length}>{t}</Line>)}
              </Page>
            </Canvas>
          </DocRow>
        </Workspace>
        <ScrollCol>
          <ScrollHead>
            <Ic s={11} c="#fff"><rect width="11" height="11" rx="1" fill="#8f9ab5" stroke="none" /><path d="M2 2.500h7L5.500 6z" fill="#fff" stroke="none" /><path d="M1.500 8h8" stroke="#fff" strokeWidth="2" /></Ic>
          </ScrollHead>
          <ScrollTrack>
            <ScrollUp />
            <ScrollThumb />
          </ScrollTrack>
        </ScrollCol>
        <SideStrip>
          <SideBtn $on $mb={3}><OutlineIc /></SideBtn>
          <SideBtn $mb={5}><TreeIc /></SideBtn>
          <SideBtn $mb={4}><BookmarkIc /></SideBtn>
          <SideBtn $mb={0}><SearchIc /></SideBtn>
        </SideStrip>
        <Panel>
          <PanelHead>
            <PanelTitle>目录</PanelTitle>
            <CloseX />
          </PanelHead>
          <PanelTools>
            <ToolBox><Chevron c="#555" s={7} /></ToolBox>
            <ToolBox><Chevron up c="#555" s={7} /></ToolBox>
            <ToolBox $off><Ic s={7} c="#c0c0c0"><path d="M0 3.500h7M3.500 0v7" /></Ic></ToolBox>
            <ToolBox $off><Ic s={7} h={1} c="#c0c0c0"><path d="M0 .5h7" /></Ic></ToolBox>
            <PanelSpacer />
            <Smiley />
          </PanelTools>
          <PanelBox />
        </Panel>
        <RightStrip>
          <Sliver $top={0} $h={70} $bg="#fff" />
          <Sliver $top={117} $h={72} $bg="#eef3fa" />
          <Handle />
          <RailBtn><Rocket /></RailBtn>
          <RailBtn><Brush /></RailBtn>
          <RailBtn><Pointer /></RailBtn>
          <RailBtn><Sliders /></RailBtn>
          <RailBtn><Archive /></RailBtn>
          <RailBtn><Help /></RailBtn>
          <RailFoot><RailDot /><RailDot /><RailDot /></RailFoot>
        </RightStrip>
      </Body>

      <StatusBar>
        <StatusCell $w={53}>页码: 2</StatusCell>
        <StatusCell $w={65} $pl={9}>页面: 2/8</StatusCell>
        <StatusCell $w={158} $gap={14}><span>节: 1/2</span><span>设置值: 13.5厘米</span></StatusCell>
        <StatusCell $w={85} $gap={12}><span>行: 6</span><span>列: 6</span></StatusCell>
        <StatusCell $w={80}>字数: 50/65</StatusCell>
        <StatusCell $w={86} $pl={9}><SpellBox />拼写检查</StatusCell>
        <StatusCell $w={87}><SpellBox />文档校对</StatusCell>
        <StatusRight>
          <Eye />
          <StatusSep $m="0 11px" />
          <ViewBtn $on $w={23}><PageView /></ViewBtn>
          <ViewBtn><OutlineView /></ViewBtn>
          <ViewBtn><BookView /></ViewBtn>
          <ViewBtn><GlobeView /></ViewBtn>
          <ViewBtn $w={27}><PenView /></ViewBtn>
          <StatusSep $m="0 17px 0 9px" />
          <Focus />
          <Zoom>100%</Zoom>
          <Caret $ml={5} />
          <Gap $w={12} />
          <Minus />
          <SliderTrack><SliderKnob /></SliderTrack>
          <Gap $w={2} />
          <PlusBold />
          <Gap $w={16} />
          <Fullscreen />
        </StatusRight>
      </StatusBar>

      <ContextMenu>
        <MenuItem><MenuIcon><MTree /></MenuIcon>设置目录级别(A)<MenuArrow $auto /></MenuItem>
        <MenuItem><MenuIcon><MCopy /></MenuIcon>复制(C)<Shortcut>Ctrl+C</Shortcut></MenuItem>
        <MenuItem><MenuIcon><MCut /></MenuIcon>剪切(T)<Shortcut>Ctrl+X</Shortcut></MenuItem>
        <MenuItem>
          <MenuIcon><MPaste /></MenuIcon>粘贴
          <PushRight $mr={-12}>
            <SubSep $m="0 11px 0 0" /><MPasteOff /><SubSep $m="0 11px 0 8px" /><MPasteText />
          </PushRight>
        </MenuItem>
        <MenuItem><MenuIcon><MPasteSpec /></MenuIcon>选择性粘贴(S)...<Shortcut>Ctrl+Alt+V</Shortcut></MenuItem>
        <MenuDivider />
        <MenuItem>
          <MenuIcon><MBrush /></MenuIcon>格式刷(F)
          <PushRight $mr={-12}><SubSep $m="0 10px 0 0" /><MBrushes /></PushRight>
        </MenuItem>
        <MenuDivider />
        <MenuItem><MenuIcon><MFont /></MenuIcon>字体(F)...<Shortcut>Ctrl+D</Shortcut></MenuItem>
        <MenuItem><MenuIcon><MPara /></MenuIcon>段落(P)...</MenuItem>
        <MenuItem><MenuIcon><MList /></MenuIcon>项目符号和编号(N)...</MenuItem>
        <MenuDivider />
        <MenuItem><MenuIcon><MLink /></MenuIcon>超链接(H)...<Shortcut>Ctrl+K</Shortcut></MenuItem>
        <MenuItem><MenuIcon><MNote /></MenuIcon>插入批注(M)</MenuItem>
        <MenuDivider />
        <MenuItem>
          <MenuIcon><MTrans /></MenuIcon>短句翻译(T)
          <PushRight><SubSep $m="0" /><MenuArrow /></PushRight>
        </MenuItem>
      </ContextMenu>

      <MiniBar>
        <MiniRow $h={22}>
          <Combo $w={69}>宋体<Caret /></Combo>
          <Combo $w={74} $ml={-1}>初号<Caret /></Combo>
          <MiniBtn $w={26}><GrowA sign="+" /></MiniBtn>
          <MiniBtn $w={28}><GrowA sign="-" /></MiniBtn>
          <MiniBtn $w={30}><LineSpace /><Caret /></MiniBtn>
        </MiniRow>
        <MiniRow $h={27} $mt={2}>
          <MiniBtn $w={24}><BoldB>B</BoldB></MiniBtn>
          <MiniBtn $w={24}><ItalicI>I</ItalicI></MiniBtn>
          <MiniBtn $w={24}><UnderU /></MiniBtn>
          <MiniBtn $w={36}><Eraser /><Caret /></MiniBtn>
          <MiniBtn $w={33}><ColorA /><Caret /></MiniBtn>
          <MiniBtn $w={33} $on $ml={2}><AlignLines /><Caret $c="#666" /></MiniBtn>
          <MiniBtn $w={26}><MBrush /></MiniBtn>
        </MiniRow>
      </MiniBar>

      <ArrowLayer width="160" height="170" viewBox="0 0 160 170">
        <path d="M142 13L92 40 105 53 17 143 27 153 115 63 127 76z" fill="#f5000d" />
      </ArrowLayer>

      <Watermark>
        <WaterBig $x={0} $y={33} $s={50}>Bai</WaterBig>
        <Paw />
        <WaterBig $x={92} $y={44} $s={30}>du</WaterBig>
        <WaterBig $x={148} $y={38} $s={36} $f='"Noto Sans CJK SC", sans-serif'>经验</WaterBig>
        <WaterUrl>jingyan.baidu.com</WaterUrl>
      </Watermark>
    </Window>
  )
}
